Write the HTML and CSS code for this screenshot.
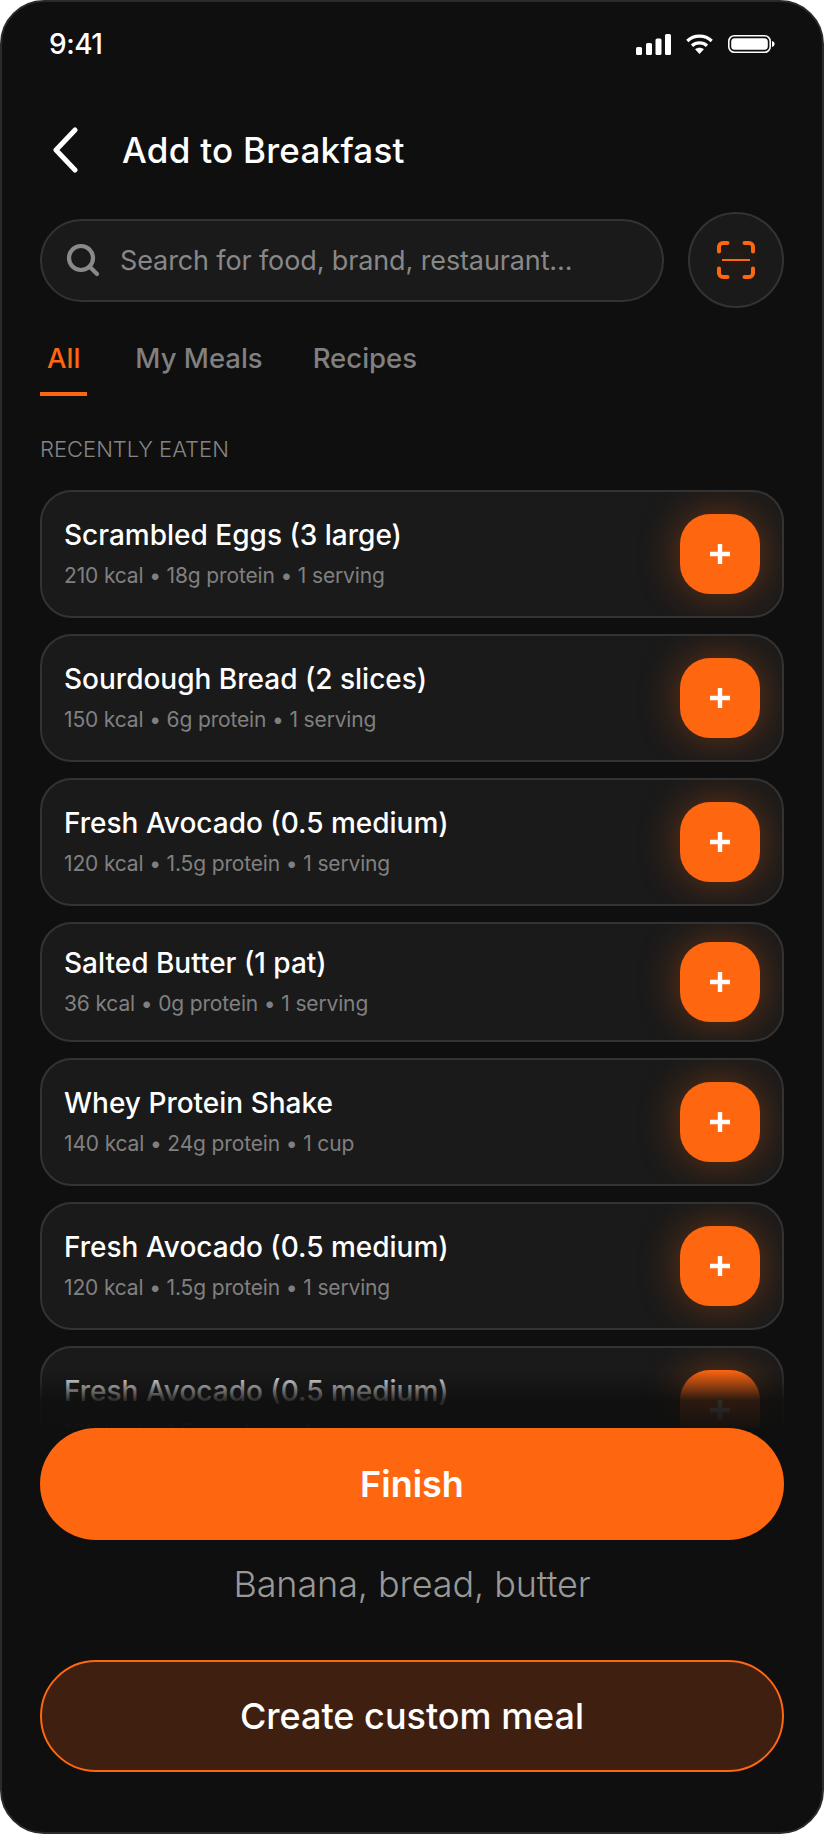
FILE: index.html
```html
<!DOCTYPE html>
<html lang="en">
<head>
<meta charset="utf-8">
<title>Add to Breakfast</title>
<link rel="stylesheet" href="styles.css">
</head>
<body>
<main class="phone">
  <div class="status">
    <span class="time">9:41</span>
    <div class="status-icons">
      <svg width="35" height="21" viewBox="0 0 35 21" fill="#fff"><rect x="0" y="13" width="6" height="8" rx="1.5"/><rect x="10" y="9" width="6" height="12" rx="1.500"/><rect x="19.500" y="4.500" width="6" height="16.500" rx="1.500"/><rect x="29" y="0" width="6" height="21" rx="1.500"/></svg>
      <svg width="27" height="20" viewBox="0 0 27 20" fill="none" stroke="#fff" stroke-width="3.2"><path d="M1.300 7C8 .6 19 .6 25.700 7"/><path d="M6 11.800c4.200-3.800 10.800-3.800 15 0"/><path d="M13.500 20l-4.400-4.700c2.500-2 6.300-2 8.800 0z" fill="#fff" stroke="none"/></svg>
      <svg width="47" height="18" viewBox="0 0 47 18" fill="none"><rect x="0.800" y="0.800" width="41.400" height="16.400" rx="5.500" stroke="#fff" stroke-width="1.600"/><rect x="3.200" y="3.200" width="36.600" height="11.600" rx="3.500" fill="#fff"/><path d="M44 6v6c1.600-.4 2.600-1.600 2.600-3S45.600 6.400 44 6z" fill="#fff"/></svg>
    </div>
  </div>

  <header class="title-row">
    <svg class="back" width="30" height="46" viewBox="0 0 30 46" fill="none" stroke="#fff" stroke-width="5" stroke-linecap="round" stroke-linejoin="round"><path d="M25 3 6 23l19 20"/></svg>
    <h1>Add to Breakfast</h1>
  </header>

  <div class="search-row">
    <div class="search">
      <svg width="34" height="34" viewBox="0 0 34 34" fill="none" stroke="#8a8a8a" stroke-width="4.200" stroke-linecap="round"><circle cx="15" cy="15" r="12"/><path d="m24 24 7 7"/></svg>
      <span>Search for food, brand, restaurant...</span>
    </div>
    <div class="scan">
      <svg width="38" height="38" viewBox="0 0 38 38" fill="none" stroke="#ff6610" stroke-width="4" stroke-linecap="round"><path d="M10.500 2H6a4 4 0 0 0-4 4v4.500"/><path d="M27.500 2H32a4 4 0 0 1 4 4v4.500"/><path d="M2 27.500V32a4 4 0 0 0 4 4h4.500"/><path d="M36 27.500V32a4 4 0 0 1-4 4h-4.500"/><path d="M5 19h28" stroke-width="2" stroke-linecap="butt"/></svg>
    </div>
  </div>

  <nav class="tabs">
    <span class="tab active">All</span>
    <span class="tab">My Meals</span>
    <span class="tab">Recipes</span>
  </nav>

  <h2 class="section">RECENTLY EATEN</h2>

  <section class="list">
    <article class="card"><div class="info"><div class="name">Scrambled Eggs (3 large)</div><div class="meta">210 kcal • 18g protein • 1 serving</div></div><div class="add"><svg width="20" height="20" viewBox="0 0 20 20" fill="#fff"><path d="M7.800 0h4.400v7.800H20v4.400h-7.800V20H7.800v-7.800H0V7.800h7.800z"/></svg></div></article>
    <article class="card"><div class="info"><div class="name">Sourdough Bread (2 slices)</div><div class="meta">150 kcal • 6g protein • 1 serving</div></div><div class="add"><svg width="20" height="20" viewBox="0 0 20 20" fill="#fff"><path d="M7.800 0h4.400v7.800H20v4.400h-7.800V20H7.800v-7.800H0V7.800h7.800z"/></svg></div></article>
    <article class="card"><div class="info"><div class="name">Fresh Avocado (0.5 medium)</div><div class="meta">120 kcal • 1.5g protein • 1 serving</div></div><div class="add"><svg width="20" height="20" viewBox="0 0 20 20" fill="#fff"><path d="M7.800 0h4.400v7.800H20v4.400h-7.800V20H7.800v-7.800H0V7.800h7.800z"/></svg></div></article>
    <article class="card compact"><div class="info"><div class="name">Salted Butter (1 pat)</div><div class="meta">36 kcal • 0g protein • 1 serving</div></div><div class="add"><svg width="20" height="20" viewBox="0 0 20 20" fill="#fff"><path d="M7.800 0h4.400v7.800H20v4.400h-7.800V20H7.800v-7.800H0V7.800h7.800z"/></svg></div></article>
    <article class="card"><div class="info"><div class="name">Whey Protein Shake</div><div class="meta">140 kcal • 24g protein • 1 cup</div></div><div class="add"><svg width="20" height="20" viewBox="0 0 20 20" fill="#fff"><path d="M7.800 0h4.400v7.800H20v4.400h-7.800V20H7.800v-7.800H0V7.800h7.800z"/></svg></div></article>
    <article class="card"><div class="info"><div class="name">Fresh Avocado (0.5 medium)</div><div class="meta">120 kcal • 1.5g protein • 1 serving</div></div><div class="add"><svg width="20" height="20" viewBox="0 0 20 20" fill="#fff"><path d="M7.800 0h4.400v7.800H20v4.400h-7.800V20H7.800v-7.800H0V7.800h7.800z"/></svg></div></article>
    <article class="card"><div class="info"><div class="name">Fresh Avocado (0.5 medium)</div><div class="meta">120 kcal • 1.5g protein • 1 serving</div></div><div class="add"><svg width="20" height="20" viewBox="0 0 20 20" fill="#fff"><path d="M7.800 0h4.400v7.800H20v4.400h-7.800V20H7.800v-7.800H0V7.800h7.800z"/></svg></div></article>
  </section>

  <footer class="actions">
    <div class="finish">Finish</div>
    <p class="summary">Banana, bread, butter</p>
    <div class="custom">Create custom meal</div>
  </footer>
</main>
</body>
</html>
```
FILE: styles.css
```css
* { box-sizing: border-box; margin: 0; padding: 0; }
html, body { width: 824px; height: 1834px; background: #fff; overflow: hidden; }
body { font-family: "Inter", "Liberation Sans", sans-serif; color: #fff; }

.phone {
  width: 824px;
  height: 1834px;
  background: #0f0f0f;
  border: 2px solid #2b2b2b;
  border-radius: 44px;
  padding: 0 38px;
  display: flex;
  flex-direction: column;
  overflow: hidden;
}

.status {
  display: flex;
  justify-content: space-between;
  align-items: center;
  height: 36px;
  margin-top: 24px;
  padding: 0 9px;
}
.time { font-size: 28px; font-weight: 500; letter-spacing: -0.5px; }
.status-icons { display: flex; align-items: center; gap: 15px; }

.title-row { display: flex; align-items: center; gap: 42px; margin-top: 65px; padding-left: 10px; height: 46px; }
.title-row h1 { font-size: 35px; font-weight: 500; letter-spacing: 0.25px; }

.search-row { display: flex; align-items: center; gap: 24px; margin-top: 39px; }
.search {
  flex: 1;
  height: 83px;
  background: #1a1a1a;
  border: 2px solid #333;
  border-radius: 42px;
  display: flex;
  align-items: center;
  gap: 20px;
  padding: 0 24px;
  color: #888;
  font-size: 27px;
  letter-spacing: -0.12px;
}
.scan {
  width: 96px;
  height: 96px;
  border-radius: 50%;
  background: radial-gradient(circle, #241b15 0, #1a1a1a 45%);
  border: 2px solid #333;
  display: flex;
  align-items: center;
  justify-content: center;
}

.tabs { display: flex; gap: 36px; margin-top: 18px; }
.tab { font-size: 27.5px; font-weight: 500; line-height: 33px; color: #808080; padding: 16px 7px 17px; border-bottom: 4px solid transparent; }
.tab.active { color: #ff6610; border-bottom-color: #ff6610; margin-right: 5px; }

.section { font-size: 22px; font-weight: 300; color: #858585; margin-top: 40px; line-height: 26px; }

.list { display: flex; flex-direction: column; gap: 16px; margin-top: 28px; height: 938px; overflow: hidden; }
.card {
  flex: none;
  display: flex;
  align-items: center;
  justify-content: space-between;
  background: #1a1a1a;
  border: 2px solid #333;
  border-radius: 32px;
  padding: 22px;
  height: 128px;
  overflow: hidden;
}
.card.compact { height: 120px; padding: 18px 22px; }
.name { font-size: 28px; font-weight: 500; line-height: 34px; }
.meta { font-size: 21px; color: #808080; line-height: 28px; margin-top: 10px; letter-spacing: -0.15px; }
.add {
  width: 80px;
  height: 80px;
  flex: none;
  background: #ff6610;
  border-radius: 30px;
  box-shadow: 0 0 40px rgba(255, 102, 16, 0.36);
  display: flex;
  align-items: center;
  justify-content: center;
}

.actions { position: relative; display: flex; flex-direction: column; align-items: stretch; }
.actions::before {
  content: "";
  position: absolute;
  left: -38px;
  right: -38px;
  top: -58px;
  height: 58px;
  background: linear-gradient(to bottom, rgba(15,15,15,0) 0%, rgba(15,15,15,.88) 52%, rgba(15,15,15,.97) 100%);
}
.finish {
  position: relative;
  height: 112px;
  border-radius: 56px;
  background: #ff6610;
  display: flex;
  align-items: center;
  justify-content: center;
  font-size: 36px;
  font-weight: 600;
}
.summary { text-align: center; font-size: 36px; font-weight: 300; color: #999; margin-top: 22px; line-height: 44px; letter-spacing: -0.1px; }
.custom {
  height: 112px;
  margin-top: 54px;
  border-radius: 56px;
  background: #3f1f10;
  border: 2px solid #ff6610;
  display: flex;
  align-items: center;
  justify-content: center;
  font-size: 36px;
  font-weight: 450;
}
```
